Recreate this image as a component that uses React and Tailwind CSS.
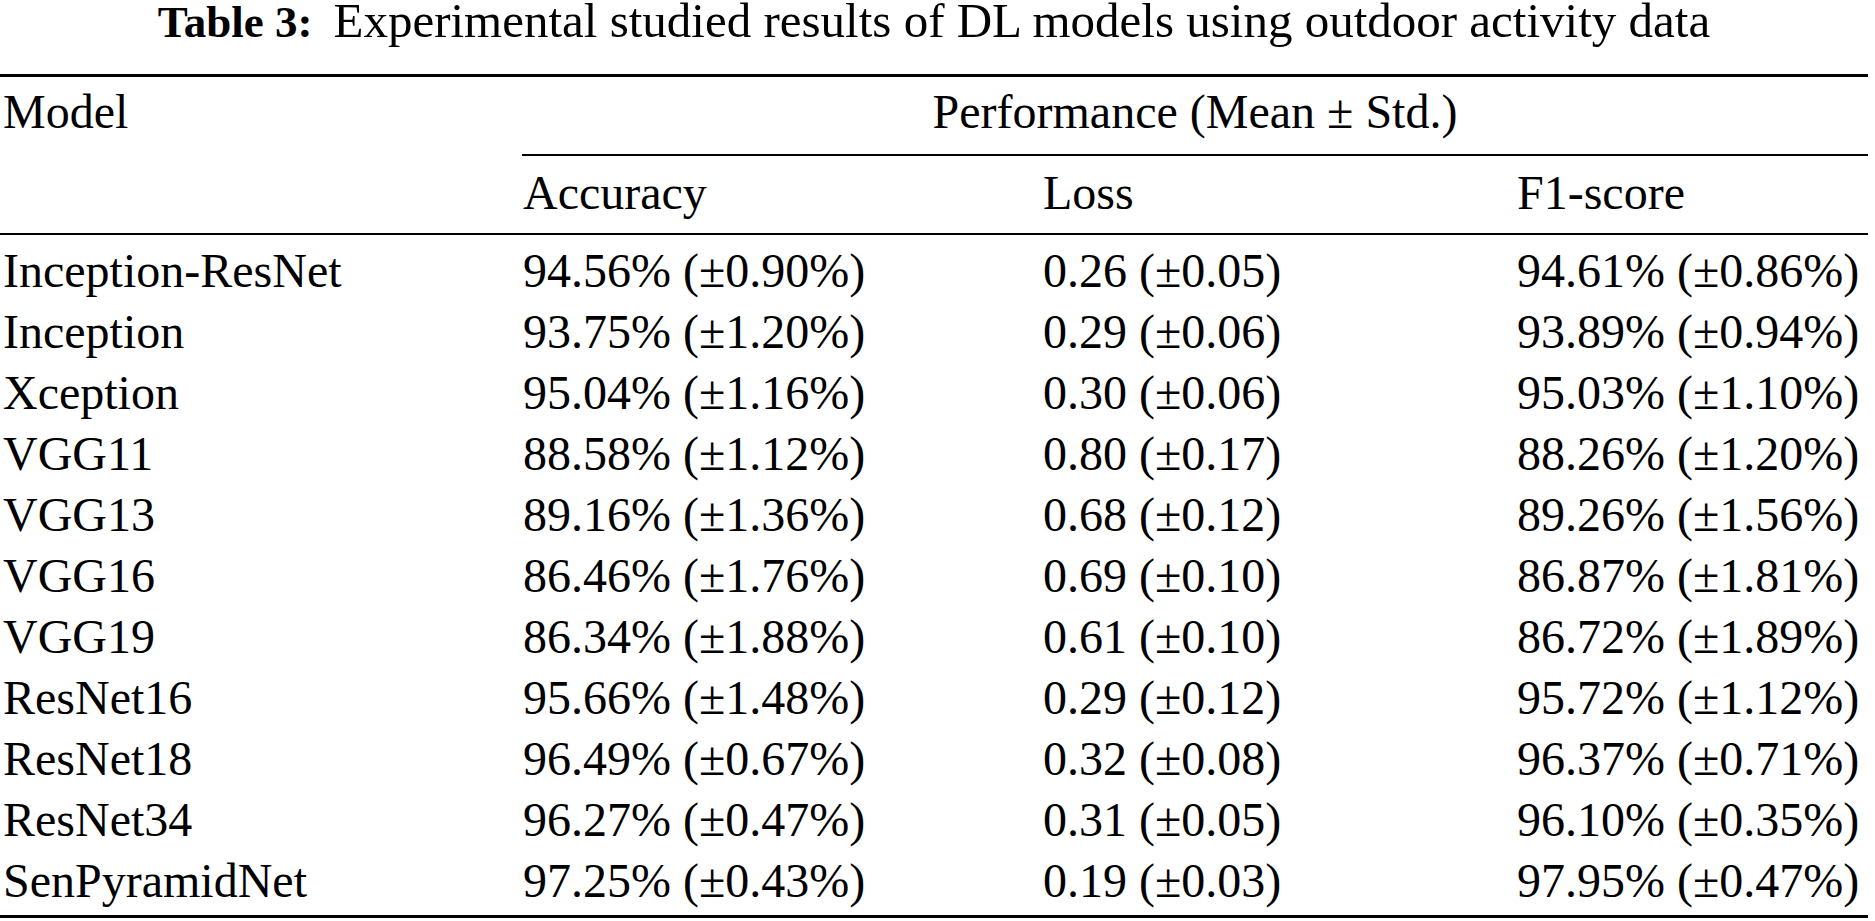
import React from "react"

const rows = [
  ["Inception-ResNet", "94.56% (±0.90%)", "0.26 (±0.05)", "94.61% (±0.86%)"],
  ["Inception", "93.75% (±1.20%)", "0.29 (±0.06)", "93.89% (±0.94%)"],
  ["Xception", "95.04% (±1.16%)", "0.30 (±0.06)", "95.03% (±1.10%)"],
  ["VGG11", "88.58% (±1.12%)", "0.80 (±0.17)", "88.26% (±1.20%)"],
  ["VGG13", "89.16% (±1.36%)", "0.68 (±0.12)", "89.26% (±1.56%)"],
  ["VGG16", "86.46% (±1.76%)", "0.69 (±0.10)", "86.87% (±1.81%)"],
  ["VGG19", "86.34% (±1.88%)", "0.61 (±0.10)", "86.72% (±1.89%)"],
  ["ResNet16", "95.66% (±1.48%)", "0.29 (±0.12)", "95.72% (±1.12%)"],
  ["ResNet18", "96.49% (±0.67%)", "0.32 (±0.08)", "96.37% (±0.71%)"],
  ["ResNet34", "96.27% (±0.47%)", "0.31 (±0.05)", "96.10% (±0.35%)"],
  ["SenPyramidNet", "97.25% (±0.43%)", "0.19 (±0.03)", "97.95% (±0.47%)"],
]

export default function App() {
  return (
    <div className="w-[1868px] bg-white text-black font-['Liberation_Serif',serif]">
      {/* caption */}
      <div className="pt-[1px] text-center text-[49px] leading-[40px] whitespace-nowrap">
        <span className="font-bold text-[45px]">Table 3:</span>
        <span className="ml-[21px]">Experimental studied results of DL models using outdoor activity data</span>
      </div>

      <div className="mt-[32px] border-t-[3px] border-black" />

      {/* header */}
      <div className="flex text-[48px] leading-[61px]">
        <div className="w-[522px] pl-[3px] pt-[4px]">Model</div>
        <div className="flex-1">
          <div className="pt-[4px] pb-[12px] text-center border-b-2 border-black">
            Performance (Mean ± Std.)
          </div>
          <div className="grid grid-cols-[521px_473px_1fr] pt-[6px] pb-[10px]">
            <div className="pl-[1px]">Accuracy</div>
            <div>Loss</div>
            <div className="pl-[1px]">F1-score</div>
          </div>
        </div>
      </div>

      <div className="border-t-2 border-black" />

      {/* body */}
      <div className="pt-[5px] pb-[4px] text-[48px] leading-[61px]">
        {rows.map((r) => (
          <div key={r[0]} className="grid grid-cols-[522px_521px_473px_1fr] whitespace-nowrap">
            <div className="pl-[3px]">{r[0]}</div>
            <div className="pl-[1px]">{r[1]}</div>
            <div>{r[2]}</div>
            <div className="pl-[1px]">{r[3]}</div>
          </div>
        ))}
      </div>

      <div className="border-t-[3px] border-black" />
    </div>
  )
}
